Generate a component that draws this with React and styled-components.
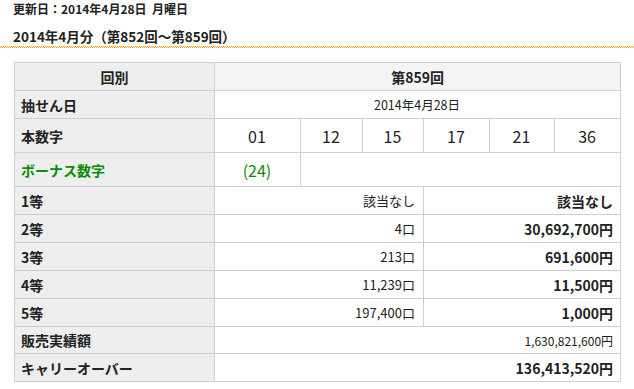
import React from 'react';
import styled, { createGlobalStyle } from 'styled-components';

const Global = createGlobalStyle`
  html, body {
    margin: 0;
    padding: 0;
    background: #fff;
  }
  body {
    font-family: "Noto Sans CJK JP", "Liberation Sans", sans-serif;
    color: #222;
  }
`;

const Page = styled.div`
  width: 634px;
  padding-top: 1px;
`;

const Updated = styled.div`
  padding: 0 0 0 13px;
  font-size: 12px;
  font-weight: bold;
  line-height: 16px;
`;

const Title = styled.h2`
  margin: 9px 0 0;
  padding: 0 0 3px 13px;
  font-size: 13.5px;
  font-weight: bold;
  line-height: 20px;
  &::after {
    content: '';
    display: block;
    height: 2px;
    margin: 0 0 0 -13px;
    background: repeating-conic-gradient(#f7a100 0 25%, #fff 0 50%) 0 0 / 2px 2px;
  }
`;

const BoxTable = styled.div`
  padding: 11px 15px 0 14px;
`;

const Table = styled.table`
  width: 606px;
  table-layout: fixed;
  border-collapse: collapse;
  font-size: 13px;
`;

const Th = styled.th`
  border: 1px solid #cfcfcf;
  background: ${p => (p.$light ? '#f4f4f4' : '#eeeeee')};
  color: ${p => (p.$green ? '#088c00' : '#222')};
  font-size: 14px;
  font-weight: bold;
  text-align: ${p => (p.$center ? 'center' : 'left')};
  padding: 0 6px;
  height: ${p => p.$h || 27}px;
  white-space: nowrap;
`;

const Td = styled.td`
  border: 1px solid #cfcfcf;
  background: #fff;
  text-align: ${p => p.$align || 'right'};
  padding: 0 ${p => p.$pr || 7}px 0 6px;
  font-size: ${p => p.$size || 13}px;
  font-weight: ${p => (p.$bold ? 'bold' : 'normal')};
  color: ${p => (p.$green ? '#088c00' : '#222')};
  white-space: nowrap;
`;

const numbers = ['01', '12', '15', '17', '21', '36'];

const prizes = [
  ['1等', '該当なし', '該当なし'],
  ['2等', '4口', '30,692,700円'],
  ['3等', '213口', '691,600円'],
  ['4等', '11,239口', '11,500円'],
  ['5等', '197,400口', '1,000円'],
];

export default function App() {
  return (
    <Page>
      <Global />
      <Updated>更新日：2014年4月28日&nbsp;&nbsp;月曜日</Updated>
      <Title>2014年4月分（第852回～第859回）</Title>
      <BoxTable>
        <Table>
          <colgroup>
            <col style={{ width: 200 }} />
            <col style={{ width: 86 }} />
            <col style={{ width: 62 }} />
            <col style={{ width: 61 }} />
            <col style={{ width: 66 }} />
            <col style={{ width: 65 }} />
            <col style={{ width: 66 }} />
          </colgroup>
          <tbody>
            <tr>
              <Th $center>回別</Th>
              <Th $center $light colSpan={6}>第859回</Th>
            </tr>
            <tr>
              <Th>抽せん日</Th>
              <Td $align="center" $size={12.5} colSpan={6}>2014年4月28日</Td>
            </tr>
            <tr>
              <Th $h={33}>本数字</Th>
              {numbers.map(n => (
                <Td key={n} $align="center" $size={16}>{n}</Td>
              ))}
            </tr>
            <tr>
              <Th $h={33} $green>ボーナス数字</Th>
              <Td $align="center" $size={16} $green>(24)</Td>
              <Td colSpan={5} />
            </tr>
            {prizes.map(([label, units, amount]) => (
              <tr key={label}>
                <Th>{label}</Th>
                <Td colSpan={3} $pr={8}>{units}</Td>
                <Td colSpan={3} $size={14} $bold>{amount}</Td>
              </tr>
            ))}
            <tr>
              <Th $h={26}>販売実績額</Th>
              <Td colSpan={6} $size={12}>1,630,821,600円</Td>
            </tr>
            <tr>
              <Th>キャリーオーバー</Th>
              <Td colSpan={6} $size={14} $bold>136,413,520円</Td>
            </tr>
          </tbody>
        </Table>
      </BoxTable>
    </Page>
  );
}
